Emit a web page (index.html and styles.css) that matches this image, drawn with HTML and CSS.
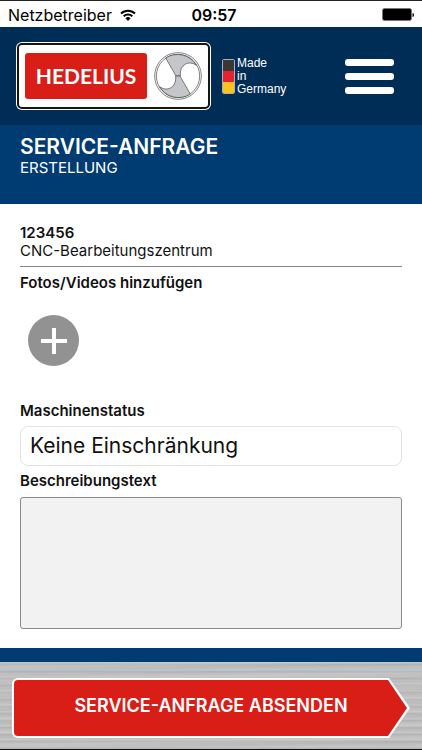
FILE: index.html
```html
<!DOCTYPE html>
<html lang="de">
<head>
<meta charset="utf-8">
<meta name="viewport" content="width=device-width, initial-scale=1">
<title>Service-Anfrage</title>
<link rel="stylesheet" href="styles.css">
</head>
<body>
<div class="status">
  <div class="carrier">Netzbetreiber
    <svg width="16" height="12" viewBox="0 0 16 12" aria-hidden="true"><g fill="none" stroke="#000" stroke-width="2"><path d="M1 4.5a10 10 0 0 1 14 0"/><path d="M3.7 7.2a6.2 6.2 0 0 1 8.6 0"/></g><path d="M8 12 5.4 9.3a3.7 3.7 0 0 1 5.2 0z"/></svg>
  </div>
  <div class="time">09:57</div>
  <div class="battery"><svg width="32" height="14" viewBox="0 0 32 14" aria-hidden="true"><rect x=".5" y=".5" width="29" height="12" rx="2" fill="#000" stroke="#777"/><path d="M30.5 5q1.500 0 1.500 2t-1.500 2z"/></svg></div>
</div>
<header class="header">
  <a class="logo" href="#">
    <span class="plate">
      <span class="brand">HEDELIUS</span>
      <svg class="drill" width="48" height="48" viewBox="0 0 144 144" aria-hidden="true">
        <g stroke="#444" stroke-width="2">
          <circle cx="72" cy="72" r="70" fill="#fff"/>
          <circle cx="72" cy="72" r="65" fill="#fff"/>
          <path fill="#c5c6ca" d="M35 18A65 65 0 0 1 127 40C106 24 76 36 79 72H66z"/>
          <path fill="#c5c6ca" d="M109 126A65 65 0 0 1 17 104C38 120 68 108 65 72H78z"/>
        </g>
      </svg>
    </span>
  </a>
  <div class="made">
    <span class="flag"><i class="black"></i><i class="red"></i><i class="gold"></i></span>
    <span>Made<br>in<br>Germany</span>
  </div>
  <button class="menu" aria-label="Menü"><i></i><i></i><i></i></button>
</header>
<div class="title">
  <h1>SERVICE-ANFRAGE</h1>
  <p>ERSTELLUNG</p>
</div>
<main class="form">
  <div class="machine">
    <strong>123456</strong>
    <p>CNC-Bearbeitungszentrum</p>
  </div>
  <h2 class="label">Fotos/Videos hinzufügen</h2>
  <button class="add" aria-label="Fotos/Videos hinzufügen"><svg width="26" height="26" viewBox="0 0 26 26" aria-hidden="true"><path d="M13 0v26M0 13h26" stroke="#fff" stroke-width="4"/></svg></button>
  <label class="label" for="state">Maschinenstatus</label>
  <select id="state" class="select"><option>Keine Einschränkung</option></select>
  <label class="label" for="description">Beschreibungstext</label>
  <textarea id="description" class="text"></textarea>
</main>
<footer class="footer">
  <button class="send">
    <span class="send-text">SERVICE-ANFRAGE ABSENDEN</span>
    <svg width="24" height="60" viewBox="0 0 24 60" aria-hidden="true"><path d="M0 0H3L24 30 3 60H0z" fill="#fff"/><path d="M0 2H2L21 30 2 58H0z" fill="#d81e17"/></svg>
  </button>
</footer>
</body>
</html>
```
FILE: styles.css
```css
* { box-sizing: border-box; }
body {
  margin: 0;
  min-height: 100vh;
  display: flex;
  flex-direction: column;
  background: #fff;
  color: #111;
  font-family: Inter, "Liberation Sans", sans-serif;
  font-size: 15px;
  line-height: 18px;
}
h1, h2, p { margin: 0; }
button { border: 0; padding: 0; font: inherit; cursor: pointer; }

.status {
  display: grid;
  grid-template-columns: 1fr auto 1fr;
  align-items: center;
  height: 27px;
  padding: 1px 8px 0;
  border-top: 1px solid #222;
  color: #000;
  font-size: 16px;
}
.carrier { display: flex; align-items: center; gap: 8px; }
.time { padding-left: 6px; font-weight: 600; }
.battery { display: flex; justify-content: flex-end; }

.header {
  display: flex;
  align-items: center;
  height: 98px;
  padding: 0 28px 0 16px;
  background: #002d56;
  color: #fff;
}
.logo {
  padding: 1px;
  border-radius: 6px;
  background: #fff;
  text-decoration: none;
}
.plate {
  display: flex;
  align-items: center;
  gap: 7px;
  padding: 7px 6px;
  border: 2px solid #151518;
  border-radius: 5px;
  background: #fff;
}
.brand {
  width: 122px;
  border-radius: 3px;
  background: #d81e17;
  color: #fff;
  font: 700 21px/46px Lato, sans-serif;
  text-align: center;
}
.drill { display: block; }
.made {
  display: flex;
  align-items: center;
  gap: 2px;
  margin-left: 11px;
  font: 12px/13px "Liberation Sans", sans-serif;
}
.flag {
  width: 13px;
  border: 1px solid #a9b3be;
  border-radius: 2px;
  overflow: hidden;
}
.flag i { display: block; height: 11px; }
.flag .black { background: #3c3635; }
.flag .red { background: #e52330; }
.flag .gold { background: #fbc31e; }
.menu {
  display: grid;
  gap: 7px;
  width: 49px;
  margin-left: auto;
  background: none;
}
.menu i { height: 7px; border-radius: 3px; background: #fff; }

.title {
  height: 79px;
  padding: 9px 20px;
  background: #003b72;
  color: #fff;
}
.title h1 { font-size: 21px; font-weight: 600; line-height: 25px; }

.form {
  flex: 1;
  display: flex;
  flex-direction: column;
  padding: 20px 20px 19px;
}
.machine {
  margin-bottom: 6px;
  padding-bottom: 6px;
  border-bottom: 1px solid #888;
}
.machine strong { display: block; font-weight: 600; }
.label { font-size: 15px; font-weight: 600; line-height: 20px; }
.add {
  display: grid;
  place-items: center;
  width: 51px;
  height: 51px;
  margin: 22px 8px 35px;
  border-radius: 50%;
  background: #929292;
}
.select {
  appearance: none;
  width: 100%;
  height: 40px;
  margin: 5px 0;
  padding: 0 9px;
  border: 1px solid #e3e3e3;
  border-radius: 8px;
  background: #fff;
  color: #111;
  font: 21px/26px Inter, sans-serif;
}
.text {
  flex: 1;
  width: 100%;
  min-height: 120px;
  margin-top: 6px;
  padding: 8px;
  border: 1px solid #8b8b8b;
  border-radius: 3px;
  background: #f2f2f2;
  font: inherit;
  resize: none;
}

.footer {
  padding: 16px 12px 11px;
  border-top: 14px solid #003b72;
  border-bottom: 1px solid #111;
  background:
    repeating-linear-gradient(180deg, rgba(255,255,255,.12) 0 1px, rgba(90,90,90,.07) 2px 3px, rgba(255,255,255,.04) 5px 7px),
    repeating-linear-gradient(179deg, #bababa 0, #c4c4c4 5px, #b9b9b9 9px, #c0c0c0 13px);
}
.send {
  display: flex;
  width: 100%;
  background: none;
}
.send-text {
  flex: 1;
  height: 60px;
  padding: 0 0 6px 22px;
  border: 2px solid #fff;
  border-right: 0;
  border-radius: 6px 0 0 6px;
  background: #d81e17;
  color: #fff;
  font-size: 18px;
  font-weight: 600;
  line-height: 52px;
}
```
